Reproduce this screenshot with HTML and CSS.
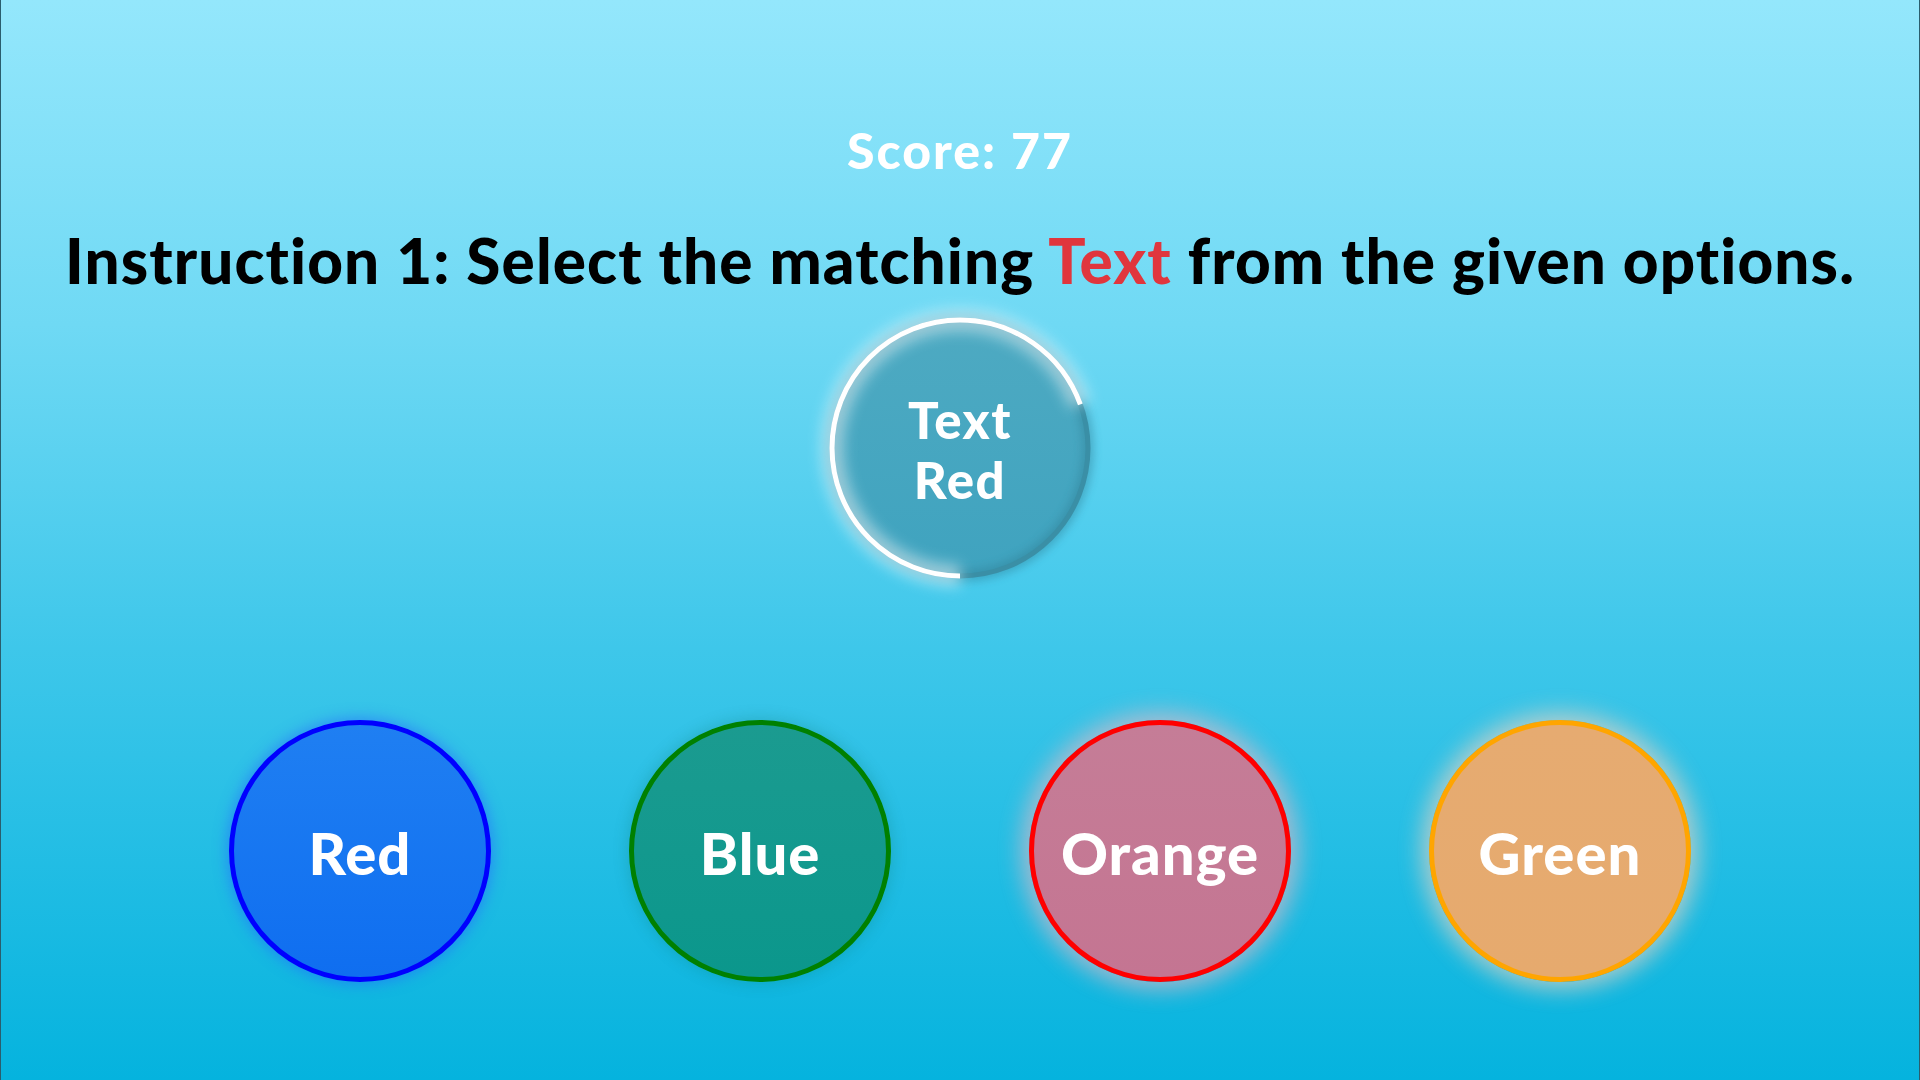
FILE: index.html
```html
<!DOCTYPE html>
<html lang="en">
<head>
<meta charset="utf-8">
<title>Color Match</title>
<link rel="stylesheet" href="styles.css">
</head>
<body>
<main class="game">
  <div class="score">Score: 77</div>
  <h1 class="instruction">Instruction 1: Select the matching <span class="hl">Text</span> from the given options.</h1>
  <div class="prompt">
    <svg class="ring" width="340" height="340" viewBox="0 0 340 340" aria-hidden="true">
      <defs>
        <linearGradient id="disc" x1="0" y1="0" x2="0" y2="1">
          <stop offset="0" stop-color="#4eaac2"/>
          <stop offset="1" stop-color="#3fa3bf"/>
        </linearGradient>
        <filter id="blur" x="-50%" y="-50%" width="200%" height="200%">
          <feGaussianBlur stdDeviation="7"/>
        </filter>
        <filter id="blur2" x="-50%" y="-50%" width="200%" height="200%">
          <feGaussianBlur stdDeviation="4"/>
        </filter>
      </defs>
      <circle cx="170" cy="170" r="128" fill="url(#disc)"/>
      <circle cx="170" cy="170" r="128" fill="none" stroke="#2f7f95" stroke-width="12" opacity="0.45" filter="url(#blur2)"/>
      <circle cx="170" cy="170" r="128" fill="none" stroke="#3a8fa6" stroke-width="5"/>
      <circle cx="170" cy="170" r="128" fill="none" stroke="#e8f6fa" stroke-width="22" opacity="0.55" stroke-dasharray="558.5 1000" transform="rotate(90 170 170)" filter="url(#blur)"/>
      <circle cx="170" cy="170" r="128" fill="none" stroke="#ffffff" stroke-width="5" stroke-dasharray="558.5 1000" transform="rotate(90 170 170)"/>
    </svg>
    <div class="prompt-text"><span>Text</span><span>Red</span></div>
  </div>
  <div class="options">
    <button class="opt opt-blue">Red</button>
    <button class="opt opt-teal">Blue</button>
    <button class="opt opt-pink">Orange</button>
    <button class="opt opt-tan">Green</button>
  </div>
</main>
</body>
</html>
```
FILE: styles.css
```css
* { box-sizing: border-box; }
html, body { margin: 0; padding: 0; height: 100%; }
body {
  background: linear-gradient(180deg, #94e7fc 0%, #6fd9f4 30%, #3ec7ea 60%, #05b3de 100%);
  border-left: 1px solid #2a5d6d;
  border-right: 1px solid #2a5d6d;
  font-family: "Lato", "DejaVu Sans", sans-serif;
  overflow: hidden;
}
.game {
  height: 100%;
  display: flex;
  flex-direction: column;
  align-items: center;
  padding-top: 122px;
}
.score {
  color: #ffffff;
  font-weight: 900;
  font-size: 50px;
  line-height: 56px;
  height: 56px;
  letter-spacing: 2px;
}
.instruction {
  margin: 44px 0 0;
  color: #000;
  font-weight: 900;
  font-size: 62px;
  line-height: 76px;
  white-space: nowrap;
  letter-spacing: 1.1px;
}
.hl { color: #e0363d; }
.prompt {
  position: relative;
  width: 340px;
  height: 340px;
  margin-top: -20px;
  margin-bottom: -30px;
}
.ring { display: block; }
.prompt-text {
  position: absolute;
  inset: 0;
  display: flex;
  flex-direction: column;
  align-items: center;
  justify-content: center;
  color: #fff;
  font-weight: 900;
  font-size: 51px;
  line-height: 60px;
  letter-spacing: 1.5px;
  padding-top: 4px;
}
.options {
  display: flex;
  gap: 138px;
  margin-top: 132px;
}
.opt {
  width: 262px;
  height: 262px;
  border-radius: 50%;
  border: 5px solid;
  color: #fff;
  font-family: inherit;
  font-weight: 900;
  font-size: 58px;
  letter-spacing: 1px;
  padding: 2px 0 0;
  display: flex;
  align-items: center;
  justify-content: center;
}
.opt-blue {
  background: linear-gradient(180deg, #1f7ff2, #0f6ef0);
  border-color: #0000ff;
  box-shadow: 0 0 14px 2px rgba(40, 100, 255, 0.55);
}
.opt-teal {
  background: linear-gradient(180deg, #1b9b90, #0b978c);
  border-color: #008000;
  box-shadow: 0 0 14px 2px rgba(10, 120, 110, 0.25);
}
.opt-pink {
  background: linear-gradient(180deg, #c57d97, #c47592);
  border-color: #ff0000;
  box-shadow: 0 0 22px 8px rgba(215, 185, 200, 0.7);
}
.opt-tan {
  background: linear-gradient(180deg, #e6ab71, #e6aa6e);
  border-color: #ffa500;
  box-shadow: 0 0 22px 8px rgba(225, 210, 195, 0.7);
}
```
